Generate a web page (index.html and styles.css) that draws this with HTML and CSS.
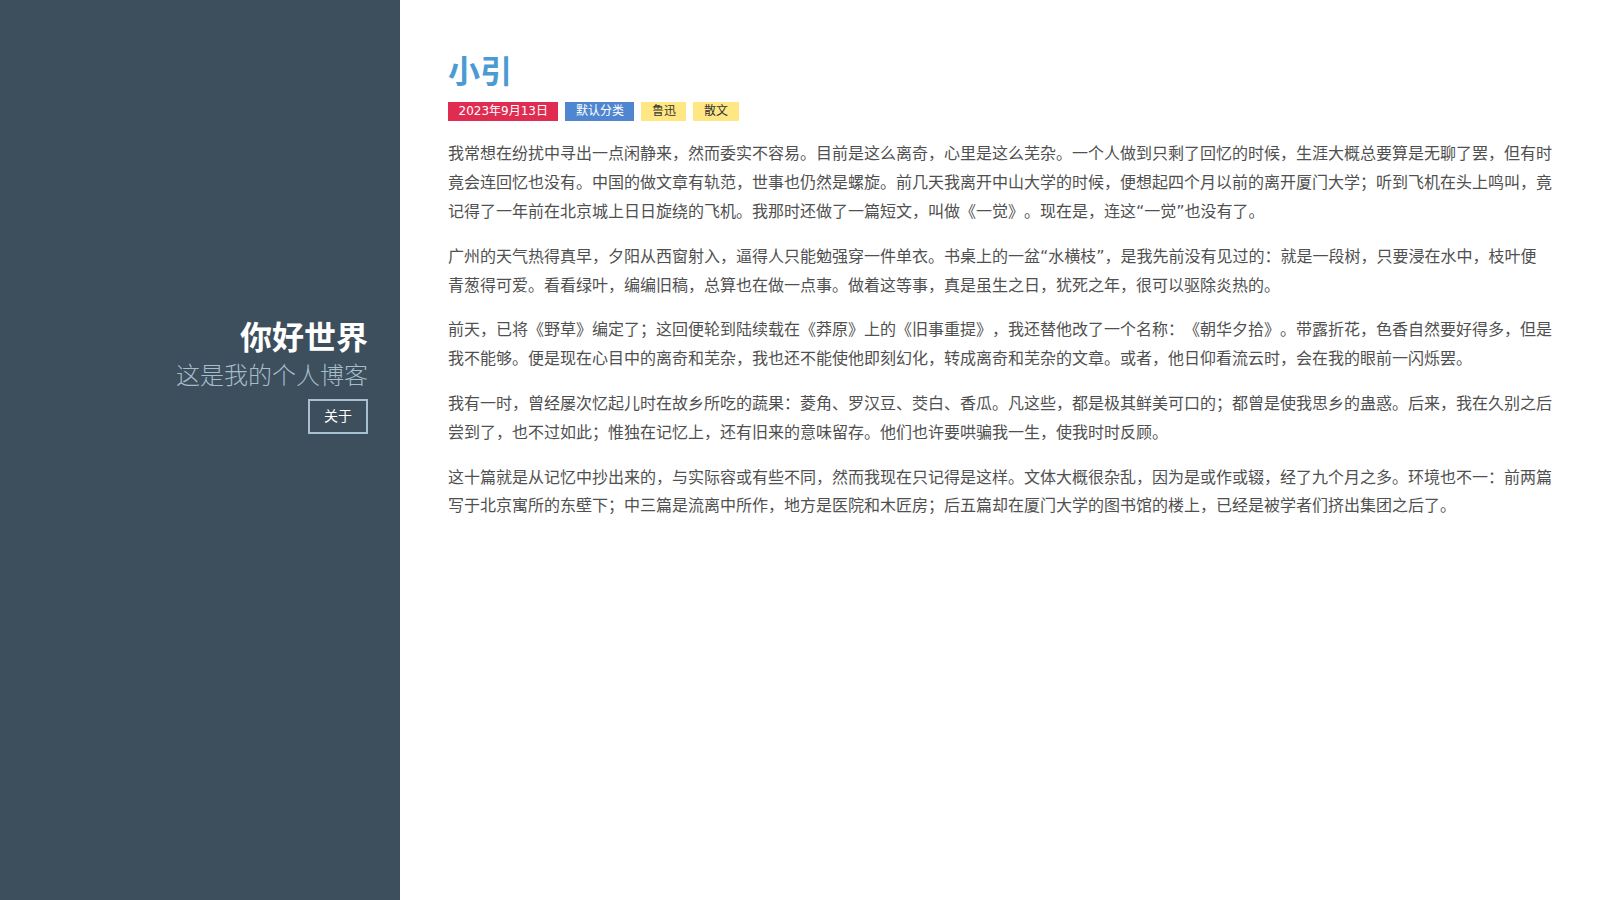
FILE: index.html
```html
<!DOCTYPE html>
<html lang="zh-CN">
<head>
<meta charset="utf-8">
<title>小引 - 你好世界</title>
<link rel="stylesheet" href="styles.css">
</head>
<body>
<div class="layout">
  <aside class="sidebar">
    <div class="brand">
      <h1 class="site-title">你好世界</h1>
      <p class="site-desc">这是我的个人博客</p>
      <a class="about-btn" href="#">关于</a>
    </div>
  </aside>
  <main class="main">
    <article class="post">
      <h2 class="post-title">小引</h2>
      <div class="post-meta">
        <span class="tag tag-date">2023年9月13日</span>
        <span class="tag tag-cat">默认分类</span>
        <span class="tag tag-label">鲁迅</span>
        <span class="tag tag-label">散文</span>
      </div>
      <div class="post-body">
        <p>我常想在纷扰中寻出一点闲静来，然而委实不容易。目前是这么离奇，心里是这么芜杂。一个人做到只剩了回忆的时候，生涯大概总要算是无聊了罢，但有时竟会连回忆也没有。中国的做文章有轨范，世事也仍然是螺旋。前几天我离开中山大学的时候，便想起四个月以前的离开厦门大学；听到飞机在头上鸣叫，竟记得了一年前在北京城上日日旋绕的飞机。我那时还做了一篇短文，叫做《一觉》。现在是，连这“一觉”也没有了。</p>
        <p>广州的天气热得真早，夕阳从西窗射入，逼得人只能勉强穿一件单衣。书桌上的一盆“水横枝”，是我先前没有见过的：就是一段树，只要浸在水中，枝叶便青葱得可爱。看看绿叶，编编旧稿，总算也在做一点事。做着这等事，真是虽生之日，犹死之年，很可以驱除炎热的。</p>
        <p>前天，已将《野草》编定了；这回便轮到陆续载在《莽原》上的《旧事重提》，我还替他改了一个名称：《朝华夕拾》。带露折花，色香自然要好得多，但是我不能够。便是现在心目中的离奇和芜杂，我也还不能使他即刻幻化，转成离奇和芜杂的文章。或者，他日仰看流云时，会在我的眼前一闪烁罢。</p>
        <p>我有一时，曾经屡次忆起儿时在故乡所吃的蔬果：菱角、罗汉豆、茭白、香瓜。凡这些，都是极其鲜美可口的；都曾是使我思乡的蛊惑。后来，我在久别之后尝到了，也不过如此；惟独在记忆上，还有旧来的意味留存。他们也许要哄骗我一生，使我时时反顾。</p>
        <p>这十篇就是从记忆中抄出来的，与实际容或有些不同，然而我现在只记得是这样。文体大概很杂乱，因为是或作或辍，经了九个月之多。环境也不一：前两篇写于北京寓所的东壁下；中三篇是流离中所作，地方是医院和木匠房；后五篇却在厦门大学的图书馆的楼上，已经是被学者们挤出集团之后了。</p>
      </div>
    </article>
  </main>
</div>
</body>
</html>
```
FILE: styles.css
```css
* { box-sizing: border-box; }
html, body {
  margin: 0;
  padding: 0;
  height: 100%;
}
body {
  font-family: "DejaVu Sans", "Noto Sans CJK SC", sans-serif;
  font-size: 16px;
  color: #505050;
  background: #fff;
  text-spacing-trim: space-all;
}
.layout {
  display: flex;
  min-height: 100vh;
}
.sidebar {
  flex: 0 0 400px;
  width: 400px;
  background: #3d4e5c;
  padding: 319px 32px 0 0;
  text-align: right;
}
.brand {
  display: flex;
  flex-direction: column;
  align-items: flex-end;
}
.site-title {
  margin: 0;
  font-size: 32px;
  line-height: 38.4px;
  font-weight: 700;
  color: #ffffff;
}
.site-desc {
  margin: 1px 0 0 0;
  font-size: 24px;
  line-height: 36px;
  font-weight: 300;
  color: #a4bccb;
}
.about-btn {
  margin-top: 5px;
  display: inline-block;
  border: 2px solid #a7c1d2;
  padding: 4px 14px;
  font-size: 14px;
  line-height: 23px;
  color: #ffffff;
  text-decoration: none;
}
.main {
  flex: 1 1 auto;
  padding: 53px 48px 48px 48px;
}
.post-title {
  margin: 0;
  font-size: 32px;
  line-height: 38.4px;
  font-weight: 700;
  color: #4a9bd3;
}
.post-meta {
  display: flex;
  gap: 7px;
  margin: 11px 0 19px 0;
}
.tag {
  display: inline-block;
  font-size: 12px;
  line-height: 19px;
  padding: 0 10.5px;
}
.tag-date {
  background: #e12c51;
  color: #ffffff;
}
.tag-cat {
  background: #4f86cf;
  color: #ffffff;
}
.tag-label {
  background: #ffe784;
  color: #333333;
}
.post-body p {
  margin: 0 0 16px 0;
  line-height: 28.8px;
}
```
